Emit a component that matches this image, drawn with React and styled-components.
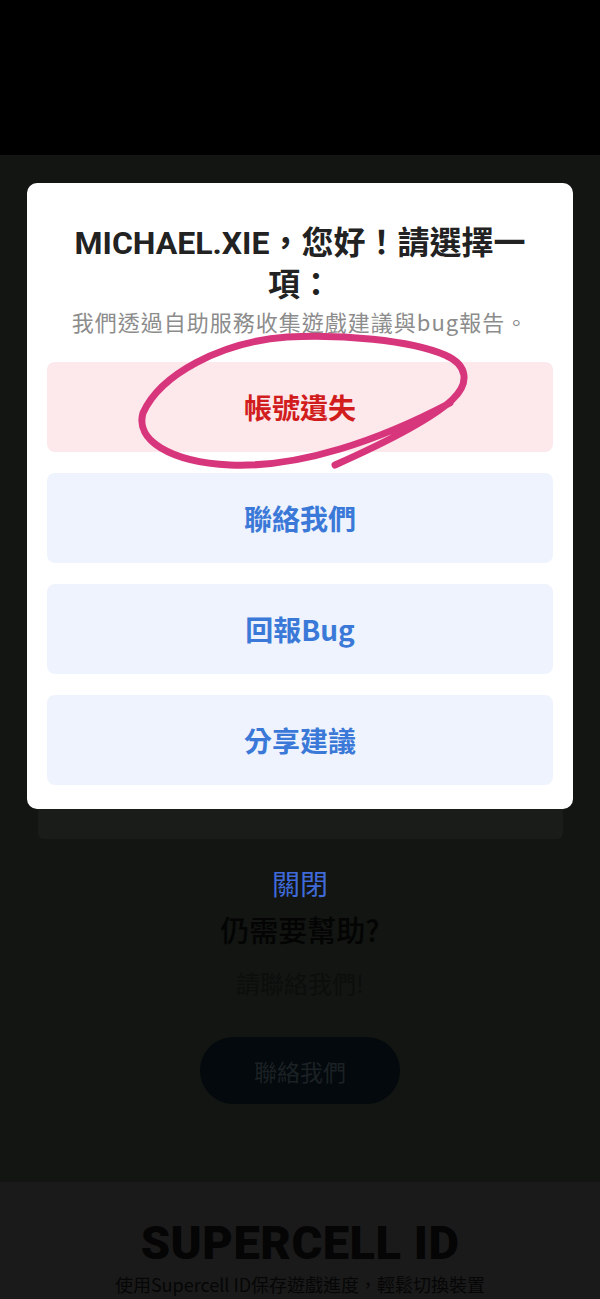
import styled, { createGlobalStyle } from "styled-components";

const GlobalStyle = createGlobalStyle`
  html, body {
    margin: 0;
    padding: 0;
    background: #121512;
  }
  body {
    font-family: "Noto Sans CJK TC", sans-serif;
  }
`;

const options = [
  { label: "帳號遺失", danger: true },
  { label: "聯絡我們" },
  { label: "回報Bug" },
  { label: "分享建議" },
];

const App = () => {
  return (
    <Page>
      <GlobalStyle />
      <TopBar />
      <Overlay>
        <Modal>
          <Title>MICHAEL.XIE，您好！請選擇一項：</Title>
          <Subtitle>我們透過自助服務收集遊戲建議與bug報告。</Subtitle>
          <OptionList>
            {options.map((o) => (
              <OptionButton key={o.label} $danger={o.danger}>
                {o.label}
              </OptionButton>
            ))}
          </OptionList>
          <Scribble viewBox="0 0 546 627">
            <path d="M 308 282 C 353 262, 403 237, 425 217 C 443 200, 441 182, 418 172 C 383 157, 313 151, 260 154 C 193 159, 133 192, 116 230 C 108 257, 143 279, 203 282 C 273 285, 353 257, 423 220" />
          </Scribble>
        </Modal>
        <BehindStrip />
        <CloseLink>關閉</CloseLink>
        <HelpTitle>仍需要幫助?</HelpTitle>
        <HelpText>請聯絡我們!</HelpText>
        <ContactPill>聯絡我們</ContactPill>
      </Overlay>
      <Footer>
        <Brand>SUPERCELL ID</Brand>
        <FooterText>使用Supercell ID保存遊戲進度，輕鬆切換裝置</FooterText>
      </Footer>
    </Page>
  );
};

const Page = styled.div`
  width: 600px;
  height: 1299px;
  overflow: hidden;
  display: flex;
  flex-direction: column;
`;

const TopBar = styled.div`
  height: 155px;
  background: #000;
  flex-shrink: 0;
`;

const Overlay = styled.div`
  height: 1027px;
  flex-shrink: 0;
  background: #121512;
  display: flex;
  flex-direction: column;
  align-items: center;
  padding-top: 28px;
  box-sizing: border-box;
`;

const Modal = styled.div`
  position: relative;
  width: 546px;
  box-sizing: border-box;
  background: #fff;
  border-radius: 10px;
  padding: 39px 20px 24px;
  display: flex;
  flex-direction: column;
  align-items: center;
`;

const Title = styled.h2`
  margin: 0;
  width: 500px;
  text-align: center;
  font-family: "Roboto", "Noto Sans CJK TC", sans-serif;
  font-weight: 700;
  font-size: 32px;
  line-height: 42px;
  color: #222;
`;

const Subtitle = styled.p`
  margin: 0;
  font-family: "Noto Sans CJK TC", sans-serif;
  font-size: 22px;
  line-height: 30px;
  letter-spacing: 1px;
  color: #8c8c8c;
`;

const OptionList = styled.div`
  width: 100%;
  margin-top: 26px;
  display: flex;
  flex-direction: column;
  gap: 21px;
`;

const OptionButton = styled.div`
  height: 90px;
  border-radius: 8px;
  display: flex;
  align-items: center;
  justify-content: center;
  font-family: "Noto Sans CJK TC", sans-serif;
  font-weight: 700;
  font-size: 28px;
  background: ${(p) => (p.$danger ? "#fde8eb" : "#eef3fd")};
  color: ${(p) => (p.$danger ? "#d11d1d" : "#3b79d8")};
`;

const Scribble = styled.svg`
  position: absolute;
  left: 0;
  top: 0;
  width: 546px;
  height: 627px;
  pointer-events: none;

  path {
    fill: none;
    stroke: #d8367c;
    stroke-width: 7;
    stroke-linecap: round;
    stroke-linejoin: round;
  }
`;

const BehindStrip = styled.div`
  width: 525px;
  height: 30px;
  background: #1a1c1a;
  border-radius: 0 0 6px 6px;
`;

const CloseLink = styled.div`
  margin-top: 26px;
  font-size: 28px;
  line-height: 36px;
  color: #3f6ad8;
`;

const HelpTitle = styled.div`
  margin-top: 9px;
  font-size: 29px;
  font-weight: 500;
  line-height: 38px;
  color: #030403;
`;

const HelpText = styled.div`
  margin-top: 20px;
  font-size: 24px;
  line-height: 30px;
  color: #0c0e0c;
`;

const ContactPill = styled.div`
  margin-top: 39px;
  width: 200px;
  height: 67px;
  border-radius: 34px;
  background: #03090c;
  display: flex;
  align-items: center;
  justify-content: center;
  font-size: 23px;
  color: #1b2124;
`;

const Footer = styled.div`
  flex: 1;
  background: #1a1a1a;
  display: flex;
  flex-direction: column;
  align-items: center;
  padding-top: 34px;
`;

const Brand = styled.div`
  font-family: "Roboto", sans-serif;
  font-weight: 900;
  font-size: 47px;
  line-height: 54px;
  letter-spacing: 0.5px;
  color: #050505;
`;

const FooterText = styled.div`
  margin-top: 4px;
  font-size: 18px;
  line-height: 20px;
  color: #060606;
`;

export default App;
